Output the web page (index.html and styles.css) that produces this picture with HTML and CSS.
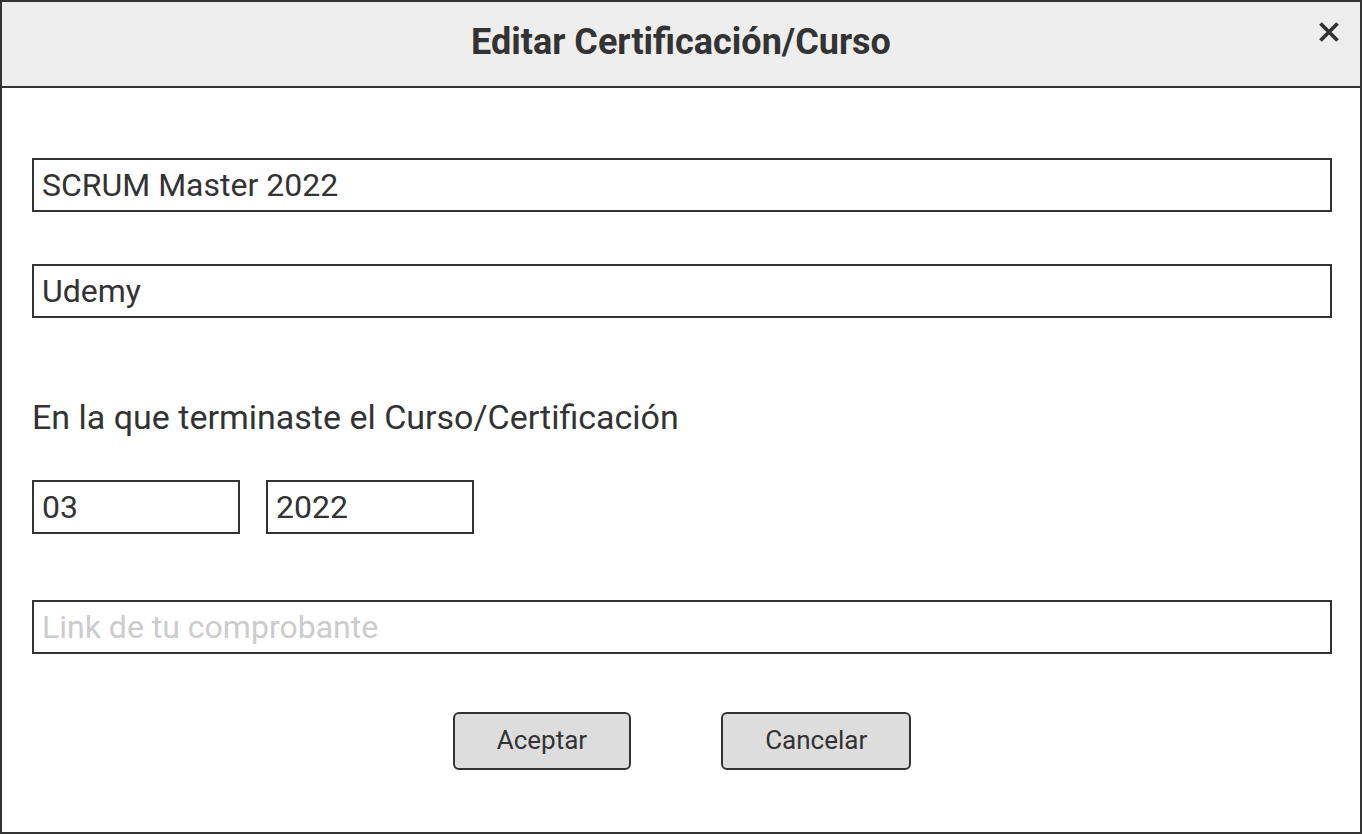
FILE: index.html
```html
<!DOCTYPE html>
<html lang="es">
<head>
<meta charset="utf-8">
<title>Editar Certificación/Curso</title>
<link rel="stylesheet" href="styles.css">
</head>
<body>
<div class="dialog">
  <header class="dialog-header">
    <h1 class="dialog-title">Editar Certificación/Curso</h1>
    <button class="close-btn" aria-label="Cerrar">
      <svg width="22" height="22" viewBox="0 0 22 22"><path d="M2.5 2.5 L19.5 19.5 M19.5 2.5 L2.5 19.5" stroke="#333" stroke-width="3.8" stroke-linecap="butt" fill="none"/></svg>
    </button>
  </header>
  <form class="dialog-body">
    <input class="field" type="text" value="SCRUM Master 2022">
    <input class="field field-gap" type="text" value="Udemy">
    <label class="field-label">En la que terminaste el Curso/Certificación</label>
    <div class="date-row">
      <input class="field field-small" type="text" value="03">
      <input class="field field-small" type="text" value="2022">
    </div>
    <input class="field field-link" type="text" placeholder="Link de tu comprobante">
    <div class="actions">
      <button type="button" class="btn">Aceptar</button>
      <button type="button" class="btn">Cancelar</button>
    </div>
  </form>
</div>
</body>
</html>
```
FILE: styles.css
```css
* { box-sizing: border-box; }
html, body { margin: 0; padding: 0; background: #fff; }
body { font-family: Roboto, "Noto Sans", sans-serif; color: #333; }

.dialog {
  width: 1362px;
  height: 834px;
  border: 2px solid #333;
  display: flex;
  flex-direction: column;
}

.dialog-header {
  position: relative;
  height: 86px;
  flex: none;
  background: #eee;
  border-bottom: 2px solid #333;
  display: flex;
  align-items: center;
  justify-content: center;
}

.dialog-title {
  margin: 0;
  font-size: 36px;
  font-weight: 700;
  color: #333;
  padding-bottom: 4px;
}

.close-btn {
  position: absolute;
  top: 19px;
  right: 20px;
  width: 22px;
  height: 22px;
  padding: 0;
  border: 0;
  background: none;
  display: flex;
}

.dialog-body {
  display: flex;
  flex-direction: column;
  padding: 70px 28px 0 30px;
}

.field {
  display: block;
  width: 100%;
  height: 54px;
  border: 2px solid #333;
  padding: 0 8px 1px;
  font-family: Roboto, "Noto Sans", sans-serif;
  font-size: 32px;
  color: #333;
  background: #fff;
  outline: none;
}
.field::placeholder { color: #ccc; }

.field-gap { margin-top: 52px; }

.field-label {
  margin-top: 81px;
  font-size: 34px;
  line-height: 36px;
  color: #333;
}

.date-row {
  display: flex;
  gap: 26px;
  margin-top: 45px;
}
.field-small { width: 208px; }

.field-link { margin-top: 66px; }

.actions {
  display: flex;
  justify-content: center;
  gap: 90px;
  margin-top: 58px;
}

.btn {
  height: 58px;
  padding: 0 42px 3px;
  border: 2px solid #333;
  border-radius: 6px;
  background: #ddd;
  font-family: Roboto, "Noto Sans", sans-serif;
  font-size: 26px;
  color: #333;
}
```
